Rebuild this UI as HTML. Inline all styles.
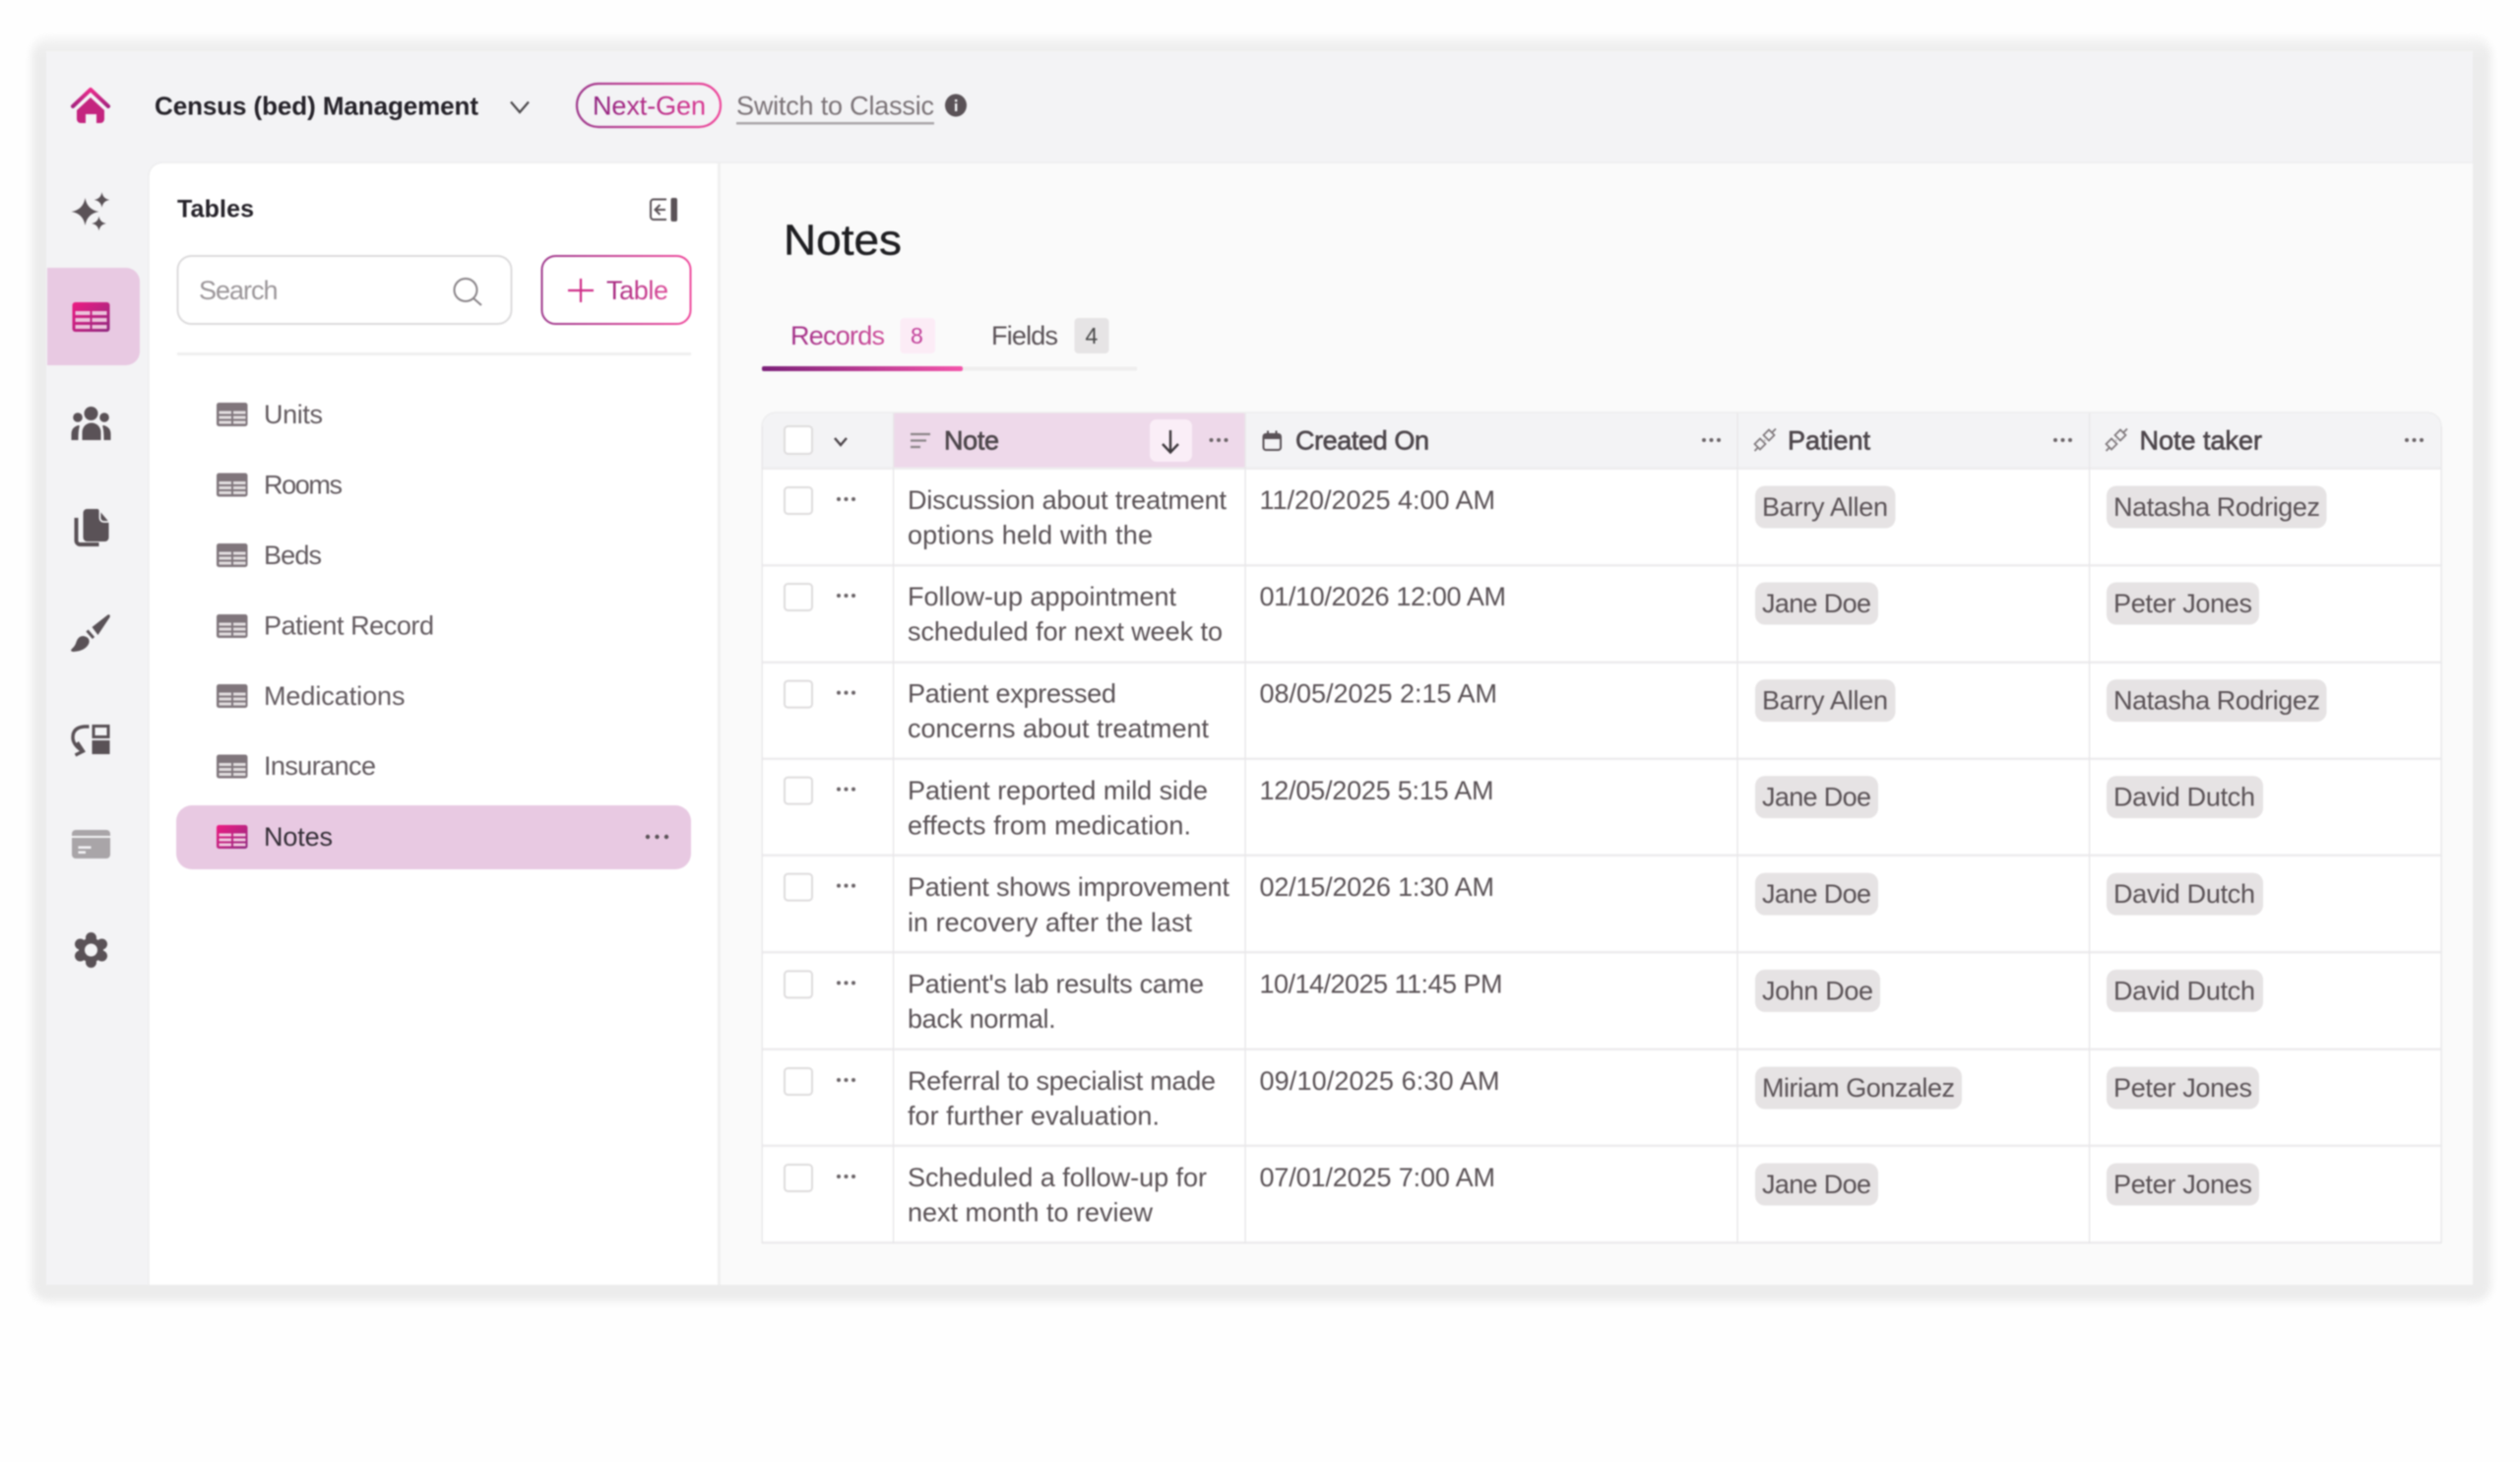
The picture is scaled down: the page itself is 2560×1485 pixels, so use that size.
<!DOCTYPE html>
<html lang="en">
<head>
<meta charset="utf-8">
<title>Census (bed) Management - Notes</title>
<style>
html,body{margin:0;padding:0;background:#fefefe;width:2560px;height:1485px;overflow:hidden}
svg{display:block;position:absolute;left:0;top:0;filter:blur(.7px)}
text{font-family:"Liberation Sans",Arial,sans-serif;font-size:27px;fill:#5a5256}
.b{font-weight:700;fill:#26232a}
.m{stroke:currentColor;stroke-width:.45px}
.h{fill:#4d464b;color:#4d464b;stroke:#4d464b;stroke-width:.65px}
.s{fill:#e6e3e4}
.tree{fill:#635b60}
</style>
</head>
<body>
<svg width="2560" height="1485" viewBox="0 0 2560 1485" xmlns="http://www.w3.org/2000/svg">
<defs>
<linearGradient id="pink" x1="0" y1="0" x2="1" y2="1"><stop offset="0" stop-color="#ee1a82"/><stop offset="1" stop-color="#8f2a80"/></linearGradient>
<linearGradient id="homeg" x1="0" y1="0" x2="0" y2="1"><stop offset="0" stop-color="#ea2c8c"/><stop offset="1" stop-color="#a4237f"/></linearGradient>
<linearGradient id="bord" x1="0" y1="0" x2="1" y2="0"><stop offset="0" stop-color="#a03c8e"/><stop offset="1" stop-color="#ee4a9c"/></linearGradient>
<linearGradient id="txt" gradientUnits="userSpaceOnUse" x1="600" y1="0" x2="720" y2="0"><stop offset="0" stop-color="#8f2480"/><stop offset="1" stop-color="#dc3a92"/></linearGradient>
<linearGradient id="txt2" gradientUnits="userSpaceOnUse" x1="612" y1="0" x2="682" y2="0"><stop offset="0" stop-color="#a0287f"/><stop offset="1" stop-color="#e0509c"/></linearGradient>
<linearGradient id="txt3" gradientUnits="userSpaceOnUse" x1="800" y1="0" x2="900" y2="0"><stop offset="0" stop-color="#a03088"/><stop offset="1" stop-color="#d0509c"/></linearGradient>
<linearGradient id="tab" x1="0" y1="0" x2="1" y2="0"><stop offset="0" stop-color="#7a1f78"/><stop offset="1" stop-color="#f454aa"/></linearGradient>
<linearGradient id="sh" gradientUnits="userSpaceOnUse" x1="0" y1="34" x2="0" y2="56"><stop offset="0" stop-color="#f6f6f6"/><stop offset="1" stop-color="#ececec"/></linearGradient>
<filter id="bl" x="-2%" y="-2%" width="104%" height="104%"><feGaussianBlur stdDeviation="4"/></filter>

<g id="tbl">
<rect x="0" y="0" width="31.5" height="24" rx="2.5" fill="#80767c"/>
<g fill="#e2dee0">
<rect x="2.5" y="8.500" width="12.500" height="3"/><rect x="17" y="8.500" width="12.500" height="3"/>
<rect x="2.500" y="13.500" width="12.500" height="3"/><rect x="17" y="13.500" width="12.500" height="3"/>
<rect x="2.500" y="18.500" width="12.500" height="3"/><rect x="17" y="18.500" width="12.500" height="3"/>
</g>
</g>
<g id="dots" fill="#6a6367"><circle cx="2" cy="0" r="2"/><circle cx="9.5" cy="0" r="2"/><circle cx="17" cy="0" r="2"/></g>
<g id="rel" fill="none" stroke="#7f787c" stroke-width="1.7">
<path d="M0 21 L4 17 M10 10.500 L10.500 10 M18 2 L21.500 -1.500"/>
<path d="M14.500 -0.500 L20 5 L14.500 10.500 L9 5 Z"/>
<path d="M5.500 8.500 L11 14 L5.500 19.500 L0 14 Z"/>
</g>
<g id="row">
<rect x="797" y="19" width="28" height="27" rx="3.5" fill="#fff" stroke="#dedcdd" stroke-width="2"/>
<use href="#dots" x="850" y="31"/>
</g>
</defs>

<!-- outer shadow band -->
<rect x="32" y="38" width="2499" height="1284" rx="18" fill="url(#sh)" filter="url(#bl)"/>
<!-- frame -->
<rect x="47" y="52" width="2465" height="1253" fill="#f3f3f5"/>
<!-- main -->
<path d="M165 165 H2512 V1305 H151 V179 a14 14 0 0 1 14 -14 Z" fill="#fafafa"/>
<path d="M165 165 H729 V1305 H151 V179 a14 14 0 0 1 14 -14 Z" fill="#fff"/>
<path d="M151 179 a14 14 0 0 1 14 -14 H2512" fill="none" stroke="#efeff0" stroke-width="2"/>
<path d="M151 179 V1305" stroke="#eeeeef" stroke-width="1.5"/>
<rect x="729" y="165" width="3" height="1140" fill="#f0f0f0"/>

<!-- top bar -->
<path d="M74 108 L92 91 L110 108" fill="none" stroke="url(#homeg)" stroke-width="4" stroke-linecap="round" stroke-linejoin="round"/>
<path d="M92 99 L106 112 V121 a4 4 0 0 1 -4 4 H98 V116 H87 V125 H82 a4 4 0 0 1 -4 -4 V112 Z" fill="#c4247f"/>
<text class="b" x="157" y="116.5" textLength="329" style="font-size:26px">Census (bed) Management</text>
<path d="M519 103.500 L528 114 L537 103.500" fill="none" stroke="#4d4a4d" stroke-width="2.200"/>
<rect x="586" y="85" width="146" height="44" rx="22" fill="none" stroke="url(#bord)" stroke-width="2.200"/>
<text x="602" y="116.5" textLength="115" style="fill:url(#txt)">Next-Gen</text>
<text x="748" y="116.5" textLength="201" style="fill:#7b7377">Switch to Classic</text>
<rect x="748" y="124" width="201" height="2.5" fill="#aaa6a9"/>
<ellipse cx="971" cy="107" rx="11" ry="11.5" fill="#5a5257"/>
<rect x="970" y="105" width="2.4" height="8" fill="#f3f3f5"/><rect x="970" y="101" width="2.4" height="2.4" fill="#f3f3f5"/>

<!-- left rail -->
<path d="M48 272 H128 a14 14 0 0 1 14 14 V357 a14 14 0 0 1 -14 14 H48 Z" fill="#e8c9e2"/>
<g transform="translate(-1.5,0)">
<path d="M88 201 Q90 213 102 215 Q90 217 88 229 Q86 217 74 215 Q86 213 88 201Z" fill="#5a5257"/>
<path d="M105 195 Q106 202 113 203 Q106 204 105 211 Q104 204 97 203 Q104 202 105 195Z" fill="#5a5257"/>
<path d="M102 219.500 Q103 226 109.500 227 Q103 228 102 234.500 Q101 228 94.500 227 Q101 226 102 219.500Z" fill="#5a5257"/>

<rect x="75" y="307" width="38" height="30" rx="3" fill="url(#pink)"/>
<g fill="#ecc3dc">
<rect x="78" y="316" width="15" height="4"/><rect x="95" y="316" width="15" height="4"/>
<rect x="78" y="323" width="15" height="4"/><rect x="95" y="323" width="15" height="4"/>
<rect x="78" y="330" width="15" height="4"/><rect x="95" y="330" width="15" height="4"/>
</g>

<g fill="#5a5257">
<circle cx="94" cy="420" r="7"/><circle cx="80.500" cy="424" r="4.800"/><circle cx="107.500" cy="424" r="4.800"/>
<path d="M85 447 V439 a9.500 9.500 0 0 1 19 0 V447 Z"/>
<path d="M74 447 V441 Q74 434 81 432 Q83 432 82 434 Q81 438 81 447 Z"/>
<path d="M114 447 V441 Q114 434 107 432 Q105 432 106 434 Q107 438 107 447 Z"/>
<path d="M90 517 H101 L112 530 V546 a4 4 0 0 1 -4 4 H90 a4 4 0 0 1 -4 -4 V521 a4 4 0 0 1 4 -4 Z"/>
<path d="M86 646 Q93 647 92 653 Q89 661 76 662 Q72 661.500 74.500 659 Q78 656 79 652 Q81 646 86 646Z"/>
<path d="M95 637 L111 624.500 Q114 623.500 113 627 L101 645 Z"/>
<rect x="95" y="752" width="18" height="14"/>
</g>
<path d="M103 518 V526 a4 4 0 0 0 4 4 H112" fill="none" stroke="#f3f3f5" stroke-width="1.800"/>
<path d="M79 526 V549 a4 4 0 0 0 4 4 H102" fill="none" stroke="#5a5257" stroke-width="4"/>
<path d="M90 640.500 L96.500 648" stroke="#5a5257" stroke-width="3"/>
<rect x="96.500" y="737.500" width="15" height="11" fill="none" stroke="#5a5257" stroke-width="3"/>
<path d="M92 738 H87 Q75.500 739 75.500 749 Q75.500 756 84 762" fill="none" stroke="#5a5257" stroke-width="3.400"/>
<path d="M80 754 L86 763 L78 767" fill="none" stroke="#5a5257" stroke-width="3.400"/>

<rect x="74.500" y="843" width="39" height="29" rx="4" fill="#a9a5a8"/>
<rect x="74.500" y="849" width="39" height="2" fill="#f3f3f5"/>
<rect x="81" y="859.500" width="13" height="2.500" fill="#f3f3f5"/>
<rect x="81" y="864.500" width="7.500" height="2.500" fill="#f3f3f5"/>

<g fill="#5a5257">
<circle cx="94" cy="965" r="12.500"/>
<circle cx="94" cy="952.500" r="5.500"/><circle cx="105" cy="959" r="5.500"/><circle cx="105" cy="971" r="5.500"/>
<circle cx="94" cy="977.500" r="5.500"/><circle cx="83" cy="971" r="5.500"/><circle cx="83" cy="959" r="5.500"/>
</g>
<circle cx="94" cy="965" r="6.500" fill="#f3f3f5"/>
</g>

<!-- tables panel -->
<text class="b" x="180" y="220.500" textLength="78" style="font-size:25px">Tables</text>
<g transform="translate(-1,0)">
<path d="M678 202.500 H665 a3 3 0 0 0 -3 3 V220 a3 3 0 0 0 3 3 H678" fill="none" stroke="#5a5257" stroke-width="2"/>
<rect x="682.500" y="201" width="6.500" height="24" rx="2" fill="#5a5257"/>
<path d="M677 213 H667 M671.500 208 L666.500 213 L671.500 218" fill="none" stroke="#5a5257" stroke-width="2"/>
</g>
<rect x="180.500" y="260" width="339" height="69" rx="14" fill="#fff" stroke="#dcdbdc" stroke-width="2"/>
<text x="202" y="304" textLength="80.500" style="fill:#9c979a">Search</text>
<circle cx="473" cy="294.500" r="11.500" fill="none" stroke="#8a8589" stroke-width="2"/>
<path d="M481 303 L489 310" stroke="#8a8589" stroke-width="2"/>
<rect x="550.500" y="260" width="151" height="69" rx="14" fill="#fff" stroke="url(#bord)" stroke-width="2"/>
<path d="M590 283 V307 M577 295 H603" stroke="#cf2e88" stroke-width="2.200"/>
<text x="616" y="304" textLength="63" style="fill:url(#txt2)">Table</text>
<rect x="180" y="358" width="522" height="3" fill="#efefef"/>

<use href="#tbl" x="220" y="409"/><text class="tree" x="268" y="430" textLength="60">Units</text>
<use href="#tbl" x="220" y="480.500"/><text class="tree" x="268" y="501.500" textLength="80">Rooms</text>
<use href="#tbl" x="220" y="552"/><text class="tree" x="268" y="573" textLength="59">Beds</text>
<use href="#tbl" x="220" y="624"/><text class="tree" x="268" y="644.500" textLength="173">Patient Record</text>
<use href="#tbl" x="220" y="695"/><text class="tree" x="268" y="716" textLength="143.500">Medications</text>
<use href="#tbl" x="220" y="766.500"/><text class="tree" x="268" y="787" textLength="114">Insurance</text>
<rect x="179" y="818" width="523" height="65" rx="16" fill="#e8c9e2"/>
<rect x="220" y="838" width="31.500" height="24" rx="2.500" fill="url(#pink)"/>
<g fill="#f0c8de">
<rect x="222.500" y="846.500" width="12.500" height="3"/><rect x="237" y="846.500" width="12.500" height="3"/>
<rect x="222.500" y="851.500" width="12.500" height="3"/><rect x="237" y="851.500" width="12.500" height="3"/>
<rect x="222.500" y="856.500" width="12.500" height="3"/><rect x="237" y="856.500" width="12.500" height="3"/>
</g>
<text x="268" y="859" textLength="70" style="fill:#342e36">Notes</text>
<g fill="#5a5257"><circle cx="658" cy="850" r="2.200"/><circle cx="667.500" cy="850" r="2.200"/><circle cx="677" cy="850" r="2.200"/></g>

<!-- heading -->
<text class="m" x="796" y="258.500" textLength="120" lengthAdjust="spacingAndGlyphs" style="font-size:44px;fill:#1f1f22;color:#1f1f22">Notes</text>

<!-- tabs -->
<text x="803" y="350" textLength="96" style="fill:url(#txt3)">Records</text>
<rect x="914.500" y="323" width="35.500" height="36" rx="4" fill="#fcecf6"/>
<text x="925" y="349" style="font-size:23px;fill:#c2409a">8</text>
<text x="1007" y="350" textLength="68" style="fill:#5a5257">Fields</text>
<rect x="1091.500" y="323" width="35" height="36" rx="4" fill="#e6e4e5"/>
<text x="1102.500" y="349" style="font-size:23px;fill:#4a4a4a">4</text>
<rect x="774" y="372.500" width="381" height="4" fill="#efeeee"/>
<rect x="774" y="372" width="204" height="5" rx="2" fill="url(#tab)"/>

<!-- table -->
<rect x="775" y="476" width="1705" height="786" fill="#fff"/>
<path d="M774 476 V433 a14 14 0 0 1 14 -14 H2466 a14 14 0 0 1 14 14 V476 Z" fill="#f3f3f5"/>
<rect x="907.500" y="419" width="357.500" height="57" fill="#eed9ea"/>
<g fill="#edecee">
<rect x="774" y="474.500" width="1706" height="2.500"/>
<rect x="774" y="573" width="1706" height="2.500"/>
<rect x="774" y="671.500" width="1706" height="2.500"/>
<rect x="774" y="769.500" width="1706" height="2.500"/>
<rect x="774" y="867.500" width="1706" height="2.500"/>
<rect x="774" y="966" width="1706" height="2.500"/>
<rect x="774" y="1064.500" width="1706" height="2.500"/>
<rect x="774" y="1162.500" width="1706" height="2.500"/>
<rect x="774" y="1261" width="1706" height="2.500"/>
</g>
<g fill="#e9e8ea">
<rect x="773.500" y="433" width="1.500" height="830"/>
<rect x="906.800" y="419" width="1.500" height="844"/>
<rect x="1264.300" y="419" width="1.500" height="844"/>
<rect x="1764.300" y="419" width="1.500" height="844"/>
<rect x="2121.800" y="419" width="1.500" height="844"/>
<rect x="2479.300" y="433" width="1.500" height="830"/>
</g>
<path d="M774 433 a14 14 0 0 1 14 -14 H2466 a14 14 0 0 1 14 14" fill="none" stroke="#ededee" stroke-width="1.500"/>

<!-- header -->
<rect x="797" y="433" width="28" height="28" rx="3.500" fill="#fff" stroke="#dedcdd" stroke-width="2"/>
<path d="M848 445 L854 452 L860 445" fill="none" stroke="#4d464b" stroke-width="2.400"/>
<path d="M925 441 H945 M925 447.500 H941 M925 454 H935" stroke="#8a8488" stroke-width="2.200"/>
<text class="h" x="959" y="456.500" textLength="56">Note</text>
<rect x="1168" y="426" width="43" height="43" rx="7" fill="#faeef7"/>
<path d="M1189 437 V459 M1181 451 L1189 459.500 L1197 451" fill="none" stroke="#3d383c" stroke-width="2.400"/>
<use href="#dots" x="1228.500" y="447"/>
<rect x="1283.500" y="441" width="17.500" height="16" rx="2.500" fill="none" stroke="#5a5257" stroke-width="2"/>
<rect x="1283.500" y="441" width="17.500" height="5" fill="#5a5257"/>
<rect x="1287" y="437.500" width="2" height="4" fill="#5a5257"/><rect x="1295.500" y="437.500" width="2" height="4" fill="#5a5257"/>
<text class="h" x="1316" y="456.500" textLength="136">Created On</text>
<use href="#dots" x="1729" y="447"/>
<use href="#rel" x="1782.500" y="437"/>
<text class="h" x="1816" y="456.500" textLength="84">Patient</text>
<use href="#dots" x="2086" y="447"/>
<use href="#rel" x="2139.500" y="437"/>
<text class="h" x="2173.500" y="456.500" textLength="124.500">Note taker</text>
<use href="#dots" x="2443" y="447"/>

<!-- row 1 -->
<g transform="translate(0,476)">
<use href="#row"/>
<text x="922" y="41" textLength="324">Discussion about treatment</text>
<text x="922" y="76.500" textLength="249">options held with the</text>
<text x="1279.500" y="41" textLength="239.500">11/20/2025 4:00 AM</text>
<rect class="s" x="1783" y="17.500" width="142.500" height="43" rx="10"/>
<text x="1790" y="48" textLength="128">Barry Allen</text>
<rect class="s" x="2140" y="17.500" width="223.500" height="43" rx="10"/>
<text x="2147" y="48" textLength="210">Natasha Rodrigez</text>
</g>
<!-- row 2 -->
<g transform="translate(0,574)">
<use href="#row"/>
<text x="922" y="41" textLength="273">Follow-up appointment</text>
<text x="922" y="76.500" textLength="320">scheduled for next week to</text>
<text x="1279.500" y="41" textLength="250.500">01/10/2026 12:00 AM</text>
<rect class="s" x="1783" y="17.500" width="125" height="43" rx="10"/>
<text x="1790" y="48" textLength="111">Jane Doe</text>
<rect class="s" x="2140" y="17.500" width="155" height="43" rx="10"/>
<text x="2147" y="48" textLength="141">Peter Jones</text>
</g>
<!-- row 3 -->
<g transform="translate(0,672.600)">
<use href="#row"/>
<text x="922" y="41" textLength="212">Patient expressed</text>
<text x="922" y="76.500" textLength="306">concerns about treatment</text>
<text x="1279.500" y="41" textLength="241.500">08/05/2025 2:15 AM</text>
<rect class="s" x="1783" y="17.500" width="142.500" height="43" rx="10"/>
<text x="1790" y="48" textLength="128">Barry Allen</text>
<rect class="s" x="2140" y="17.500" width="223.500" height="43" rx="10"/>
<text x="2147" y="48" textLength="210">Natasha Rodrigez</text>
</g>
<!-- row 4 -->
<g transform="translate(0,770.600)">
<use href="#row"/>
<text x="922" y="41.500" textLength="305">Patient reported mild side</text>
<text x="922" y="77" textLength="288">effects from medication.</text>
<text x="1279.500" y="41.500" textLength="238">12/05/2025 5:15 AM</text>
<rect class="s" x="1783" y="17.500" width="125" height="43" rx="10"/>
<text x="1790" y="48" textLength="111">Jane Doe</text>
<rect class="s" x="2140" y="17.500" width="159" height="43" rx="10"/>
<text x="2147" y="48" textLength="144">David Dutch</text>
</g>
<!-- row 5 -->
<g transform="translate(0,868.600)">
<use href="#row"/>
<text x="922" y="41.500" textLength="327">Patient shows improvement</text>
<text x="922" y="77.500" textLength="289">in recovery after the last</text>
<text x="1279.500" y="41.500" textLength="238.500">02/15/2026 1:30 AM</text>
<rect class="s" x="1783" y="18" width="125" height="43" rx="10"/>
<text x="1790" y="48.500" textLength="111">Jane Doe</text>
<rect class="s" x="2140" y="18" width="159" height="43" rx="10"/>
<text x="2147" y="48.500" textLength="144">David Dutch</text>
</g>
<!-- row 6 -->
<g transform="translate(0,967.400)">
<use href="#row"/>
<text x="922" y="41" textLength="301">Patient's lab results came</text>
<text x="922" y="76.500" textLength="150.700">back normal.</text>
<text x="1279.500" y="41" textLength="247">10/14/2025 11:45 PM</text>
<rect class="s" x="1783" y="17.500" width="127" height="43" rx="10"/>
<text x="1790" y="48" textLength="113">John Doe</text>
<rect class="s" x="2140" y="17.500" width="159" height="43" rx="10"/>
<text x="2147" y="48" textLength="144">David Dutch</text>
</g>
<!-- row 7 -->
<g transform="translate(0,1066)">
<use href="#row"/>
<text x="922" y="41" textLength="313">Referral to specialist made</text>
<text x="922" y="76.500" textLength="256">for further evaluation.</text>
<text x="1279.500" y="41" textLength="244">09/10/2025 6:30 AM</text>
<rect class="s" x="1783" y="17.500" width="210" height="43" rx="10"/>
<text x="1790" y="48" textLength="196">Miriam Gonzalez</text>
<rect class="s" x="2140" y="17.500" width="155" height="43" rx="10"/>
<text x="2147" y="48" textLength="141">Peter Jones</text>
</g>
<!-- row 8 -->
<g transform="translate(0,1164)">
<use href="#row"/>
<text x="922" y="41" textLength="304">Scheduled a follow-up for</text>
<text x="922" y="76.500" textLength="249">next month to review</text>
<text x="1279.500" y="41" textLength="239.500">07/01/2025 7:00 AM</text>
<rect class="s" x="1783" y="17.500" width="125" height="43" rx="10"/>
<text x="1790" y="48" textLength="111">Jane Doe</text>
<rect class="s" x="2140" y="17.500" width="155" height="43" rx="10"/>
<text x="2147" y="48" textLength="141">Peter Jones</text>
</g>
</svg>
</body>
</html>
